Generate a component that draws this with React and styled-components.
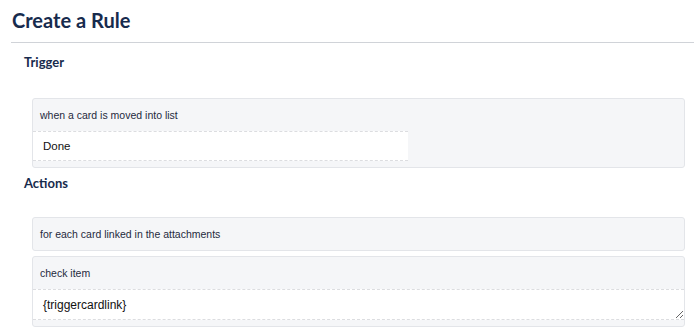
import React from 'react';
import styled, { createGlobalStyle } from 'styled-components';

const GlobalStyle = createGlobalStyle`
  html, body {
    margin: 0;
    padding: 0;
    background: #fff;
  }
  body {
    font-family: 'Liberation Sans', Arial, sans-serif;
  }
`;

const Page = styled.div`
  padding-left: 11px;
`;

const Header = styled.div`
  height: 43px;
  border-bottom: 1px solid #d0d3d8;
  box-sizing: border-box;
  display: flex;
  align-items: center;
  padding-left: 1px;
`;

const Title = styled.h1`
  margin: 0;
  font-family: Lato, 'Noto Sans', sans-serif;
  font-weight: 700;
  font-size: 20px;
  color: #172b4d;
  line-height: 24px;
  padding-bottom: 2px;
`;

const Section = styled.section`
  padding-left: 13px;
`;

const Label = styled.h3`
  margin: 0;
  font-family: Lato, 'Noto Sans', sans-serif;
  font-weight: 700;
  font-size: 13px;
  line-height: 16px;
  color: #172b4d;
  margin-top: ${p => p.$top}px;
  margin-bottom: ${p => p.$bottom}px;
`;

const Stack = styled.div`
  display: flex;
  flex-direction: column;
  gap: 5px;
  margin-left: 8px;
  width: 653px;
`;

const Box = styled.div`
  background: #f5f6f8;
  border: 1px solid #e3e5e9;
  border-radius: 3px;
  display: flex;
  flex-direction: column;
  padding-bottom: ${p => (p.$field ? 6 : 0)}px;
`;

const BoxHead = styled.div`
  font-size: 10.5px;
  line-height: 14px;
  color: #1f2a3d;
  padding: 9px 7px 9px 7px;
`;

const TextInput = styled.input`
  box-sizing: border-box;
  width: 375px;
  height: 30px;
  margin: 0;
  border: none;
  border-top: 1px dashed #dcdde0;
  border-bottom: 1px dashed #dcdde0;
  border-radius: 0;
  background: #fff;
  padding: 0 10px;
  font-family: 'Liberation Sans', Arial, sans-serif;
  font-size: 11.5px;
  color: #111;
  outline: none;
`;

const TextArea = styled.textarea`
  box-sizing: border-box;
  display: block;
  width: 100%;
  height: 31px;
  margin: 0;
  border: none;
  border-top: 1px dashed #dcdde0;
  border-bottom: 1px dashed #dcdde0;
  border-radius: 0;
  background: #fff;
  padding: 8px 10px;
  font-family: 'Liberation Sans', Arial, sans-serif;
  font-size: 12px;
  line-height: 14px;
  color: #111;
  outline: none;
  resize: vertical;
  overflow: auto;
`;

export default function App() {
  return (
    <Page>
      <GlobalStyle />
      <Header>
        <Title>Create a Rule</Title>
      </Header>
      <Section>
        <Label $top={11} $bottom={28}>Trigger</Label>
        <Stack>
          <Box $field>
            <BoxHead>when a card is moved into list</BoxHead>
            <TextInput defaultValue="Done" />
          </Box>
        </Stack>
        <Label $top={7} $bottom={26}>Actions</Label>
        <Stack>
          <Box>
            <BoxHead>for each card linked in the attachments</BoxHead>
          </Box>
          <Box $field>
            <BoxHead>check item</BoxHead>
            <TextArea defaultValue="{triggercardlink}" />
          </Box>
        </Stack>
      </Section>
    </Page>
  );
}
